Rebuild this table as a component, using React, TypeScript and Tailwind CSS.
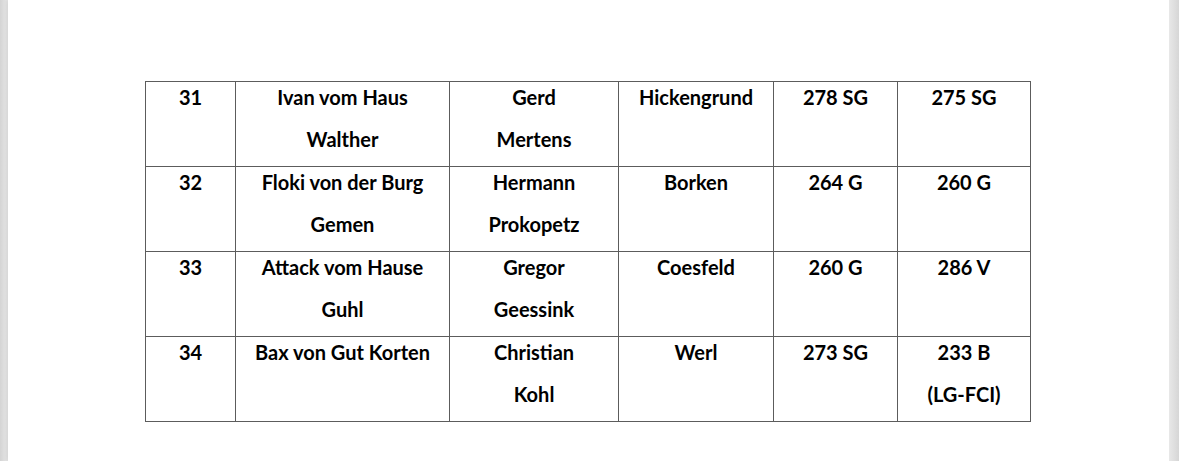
const rows: string[][][] = [
  [['31'], ['Ivan vom Haus', 'Walther'], ['Gerd', 'Mertens'], ['Hickengrund'], ['278 SG'], ['275 SG']],
  [['32'], ['Floki von der Burg', 'Gemen'], ['Hermann', 'Prokopetz'], ['Borken'], ['264 G'], ['260 G']],
  [['33'], ['Attack vom Hause', 'Guhl'], ['Gregor', 'Geessink'], ['Coesfeld'], ['260 G'], ['286 V']],
  [['34'], ['Bax von Gut Korten'], ['Christian', 'Kohl'], ['Werl'], ['273 SG'], ['233 B', '(LG-FCI)']],
];

const widths = ['w-[90px]', 'w-[214px]', 'w-[169px]', 'w-[155px]', 'w-[124px]', 'w-[133px]'];

export default function App() {
  return (
    <div className="flex h-[461px] w-[1179px] bg-[#dcdcdc]">
      <div className="w-[8px] bg-gradient-to-r from-[#d4d4d4] to-[#e8e8e8]" />
      <div className="flex-1 bg-white pl-[137px] pt-[81px] shadow-[0_0_4px_rgba(0,0,0,0.15)]">
        <table
          className="border-collapse text-center text-[20px] font-bold text-black"
          style={{ fontFamily: 'Lato, "Open Sans", sans-serif' }}
        >
          <tbody>
            {rows.map((r) => (
              <tr key={r[0][0]} className="h-[85px]">
                {r.map((lines, i) => (
                  <td
                    key={i}
                    className={`${widths[i]} border border-[#5c5c5c] px-1 align-top leading-[42px] whitespace-nowrap`}
                  >
                    <div className="-mt-[6px]">
                      {lines.map((l) => (
                        <div key={l}>{l}</div>
                      ))}
                    </div>
                  </td>
                ))}
              </tr>
            ))}
          </tbody>
        </table>
      </div>
      <div className="w-[10px] bg-gradient-to-r from-[#e8e8e8] to-[#d6d6d6]" />
    </div>
  );
}
